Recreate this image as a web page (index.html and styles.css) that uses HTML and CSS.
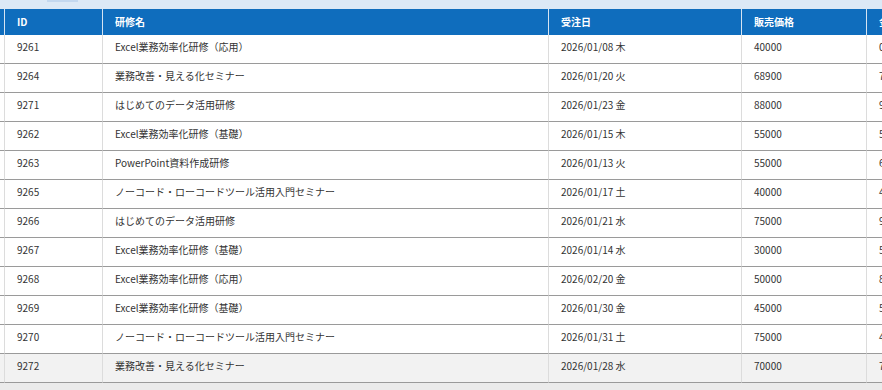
FILE: index.html
```html
<!DOCTYPE html>
<html lang="ja">
<head>
<meta charset="utf-8">
<link rel="stylesheet" href="styles.css">
</head>
<body>
<div class="topband"><div class="tab"></div></div>
<div class="wrap">
<table class="grid">
<colgroup>
<col class="c0"><col class="c1"><col class="c2"><col class="c3"><col class="c4"><col class="c5">
</colgroup>
<thead>
<tr><th></th><th>ID</th><th>研修名</th><th>受注日</th><th>販売価格</th><th>金額</th></tr>
</thead>
<tbody>
<tr><td></td><td>9261</td><td>Excel業務効率化研修（応用）</td><td>2026/01/08 木</td><td>40000</td><td>0</td></tr>
<tr><td></td><td>9264</td><td>業務改善・見える化セミナー</td><td>2026/01/20 火</td><td>68900</td><td>7</td></tr>
<tr><td></td><td>9271</td><td>はじめてのデータ活用研修</td><td>2026/01/23 金</td><td>88000</td><td>9</td></tr>
<tr><td></td><td>9262</td><td>Excel業務効率化研修（基礎）</td><td>2026/01/15 木</td><td>55000</td><td>5</td></tr>
<tr><td></td><td>9263</td><td>PowerPoint資料作成研修</td><td>2026/01/13 火</td><td>55000</td><td>6</td></tr>
<tr><td></td><td>9265</td><td>ノーコード・ローコードツール活用入門セミナー</td><td>2026/01/17 土</td><td>40000</td><td>4</td></tr>
<tr><td></td><td>9266</td><td>はじめてのデータ活用研修</td><td>2026/01/21 水</td><td>75000</td><td>9</td></tr>
<tr><td></td><td>9267</td><td>Excel業務効率化研修（基礎）</td><td>2026/01/14 水</td><td>30000</td><td>5</td></tr>
<tr><td></td><td>9268</td><td>Excel業務効率化研修（応用）</td><td>2026/02/20 金</td><td>50000</td><td>8</td></tr>
<tr><td></td><td>9269</td><td>Excel業務効率化研修（基礎）</td><td>2026/01/30 金</td><td>45000</td><td>5</td></tr>
<tr><td></td><td>9270</td><td>ノーコード・ローコードツール活用入門セミナー</td><td>2026/01/31 土</td><td>75000</td><td>4</td></tr>
<tr class="hover"><td></td><td>9272</td><td>業務改善・見える化セミナー</td><td>2026/01/28 水</td><td>70000</td><td>7</td></tr>
</tbody>
</table>
</div>
</body>
</html>
```

FILE: styles.css
```css
html, body {
  margin: 0;
  padding: 0;
}
body {
  background: #ebebeb;
  font-family: "Noto Sans CJK JP", "Noto Sans", sans-serif;
  font-size: 10px;
  color: #333;
  overflow: hidden;
  width: 882px;
  height: 390px;
}
.topband {
  height: 9px;
  background: #dce9f6;
}
.tab {
  margin-left: 47px;
  width: 31px;
  height: 2px;
  background: #c3d8ef;
}
.wrap {
  width: 882px;
  overflow: hidden;
}
.grid {
  table-layout: fixed;
  border-collapse: separate;
  border-spacing: 0;
  width: 1017px;
  background: #fff;
}
.c0 { width: 5px; }
.c1 { width: 98px; }
.c2 { width: 446px; }
.c3 { width: 193px; }
.c4 { width: 125px; }
.c5 { width: 150px; }
.grid th {
  background: #0f6dbd;
  color: #fff;
  font-weight: bold;
  text-align: left;
  height: 26px;
  padding: 0 12px 1px;
  box-sizing: border-box;
  border-right: 1px solid #d6e4f2;
  white-space: nowrap;
  overflow: hidden;
}
.grid td {
  height: 29px;
  box-sizing: border-box;
  padding: 0 12px 5px;
  border-right: 1px solid #dcdcdc;
  border-bottom: 1px solid #9a9a9a;
  white-space: nowrap;
  overflow: hidden;
}
.grid th:first-child, .grid td:first-child {
  padding: 0;
}
.grid tr.hover td {
  background: #f2f2f2;
}
```
